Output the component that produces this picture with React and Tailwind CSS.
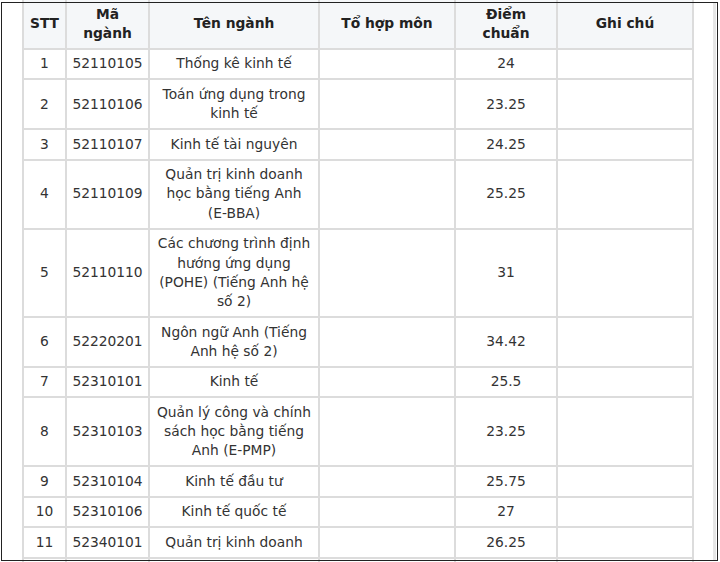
import React from "react";

const rows = [
  ["1", "52110105", ["Thống kê kinh tế"], "24"],
  ["2", "52110106", ["Toán ứng dụng trong", "kinh tế"], "23.25"],
  ["3", "52110107", ["Kinh tế tài nguyên"], "24.25"],
  ["4", "52110109", ["Quản trị kinh doanh", "học bằng tiếng Anh", "(E-BBA)"], "25.25"],
  ["5", "52110110", ["Các chương trình định", "hướng ứng dụng", "(POHE) (Tiếng Anh hệ", "số 2)"], "31"],
  ["6", "52220201", ["Ngôn ngữ Anh (Tiếng", "Anh hệ số 2)"], "34.42"],
  ["7", "52310101", ["Kinh tế"], "25.5"],
  ["8", "52310103", ["Quản lý công và chính", "sách học bằng tiếng", "Anh (E-PMP)"], "23.25"],
  ["9", "52310104", ["Kinh tế đầu tư"], "25.75"],
  ["10", "52310106", ["Kinh tế quốc tế"], "27"],
  ["11", "52340101", ["Quản trị kinh doanh"], "26.25"],
];

function Cell({ children, head }) {
  return (
    <div
      className={
        "flex items-center justify-center text-center whitespace-nowrap py-[4.6px] leading-[19.3px] " +
        (head ? "bg-[#f5f7f9] font-bold text-[#222]" : "bg-white text-[#333]")
      }
    >
      <div>{children}</div>
    </div>
  );
}

function Lines({ lines }) {
  return lines.map((l, i) => (
    <React.Fragment key={i}>
      {i > 0 && <br />}
      {l}
    </React.Fragment>
  ));
}

export default function App() {
  return (
    <div className="relative w-[720px] h-[562px] overflow-hidden bg-white font-['DejaVu_Sans',Verdana,sans-serif] text-[13.8px]">
      <div className="ml-[22px] w-[672px] grid grid-cols-[41px_81px_168px_134px_100px_134px] gap-[2px] px-[2px] bg-[#dcdcdc]">
        <Cell head>STT</Cell>
        <Cell head>
          Mã
          <br />
          ngành
        </Cell>
        <Cell head>Tên ngành</Cell>
        <Cell head>Tổ hợp môn</Cell>
        <Cell head>
          Điểm
          <br />
          chuẩn
        </Cell>
        <Cell head>Ghi chú</Cell>
        {rows.map((r) => (
          <React.Fragment key={r[0]}>
            <Cell>{r[0]}</Cell>
            <Cell>{r[1]}</Cell>
            <Cell>
              <Lines lines={r[2]} />
            </Cell>
            <Cell>{""}</Cell>
            <Cell>{r[3]}</Cell>
            <Cell>{""}</Cell>
          </React.Fragment>
        ))}
        <div className="h-[30px] bg-white" />
        <div className="h-[30px] bg-white" />
        <div className="h-[30px] bg-white" />
        <div className="h-[30px] bg-white" />
        <div className="h-[30px] bg-white" />
        <div className="h-[30px] bg-white" />
      </div>
      <div className="absolute left-[713px] top-[3px] w-[3px] h-[557px] bg-[#e6e6e6]" />
      <div className="absolute left-[1px] top-[2px] w-[717px] h-[559px] border border-[#222] pointer-events-none" />
    </div>
  );
}
